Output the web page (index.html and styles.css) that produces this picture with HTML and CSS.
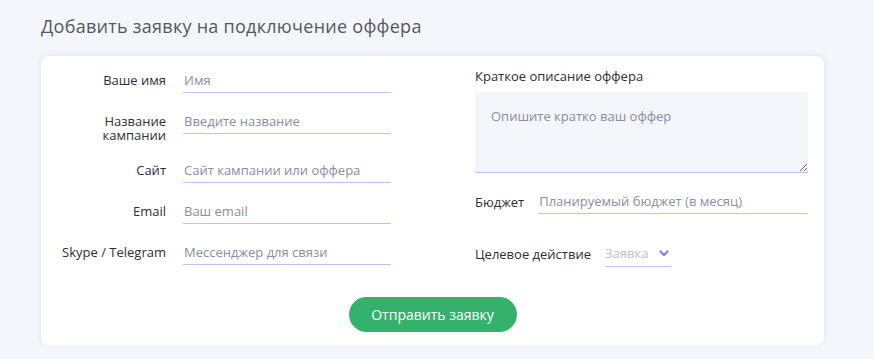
FILE: index.html
```html
<!DOCTYPE html>
<html lang="ru">
<head>
    <meta charset="UTF-8">
    <meta name="viewport" content="width=device-width, initial-scale=1.0">
    <title>Добавить заявку</title>
    <link rel="stylesheet" href="styles.css">
</head>
<body>
    <h1 class="title">Добавить заявку на подключение оффера</h1>
    <form class="card" action="">
        <div class="cols">
            <div class="col_left">
                <label class="row">
                    <span class="lbl">Ваше имя</span>
                    <input type="text" class="field" placeholder="Имя">
                </label>
                <label class="row">
                    <span class="lbl">Название кампании</span>
                    <input type="text" class="field" placeholder="Введите название">
                </label>
                <label class="row">
                    <span class="lbl">Сайт</span>
                    <input type="text" class="field" placeholder="Сайт кампании или оффера">
                </label>
                <label class="row">
                    <span class="lbl">Email</span>
                    <input type="text" class="field" placeholder="Ваш email">
                </label>
                <label class="row">
                    <span class="lbl">Skype / Telegram</span>
                    <input type="text" class="field" placeholder="Мессенджер для связи">
                </label>
            </div>
            <div class="col_right">
                <p class="desc_lbl">Краткое описание оффера</p>
                <textarea class="desc" placeholder="Опишите кратко ваш оффер"></textarea>
                <label class="line budget">
                    <span class="lbl_r">Бюджет</span>
                    <input type="text" class="field" placeholder="Планируемый бюджет (в месяц)">
                </label>
                <div class="line target">
                    <span class="lbl_r">Целевое действие</span>
                    <div class="select">
                        <select>
                            <option>Заявка</option>
                            <option>Продажа</option>
                            <option>Регистрация</option>
                        </select>
                        <svg width="10" height="7" viewBox="0 0 10 7"><path d="M1.5 1.5 L5 5 L8.5 1.5" fill="none" stroke="#9a7cf1" stroke-width="2.4" stroke-linecap="round" stroke-linejoin="round"/></svg>
                    </div>
                </div>
            </div>
        </div>
        <div class="foot">
            <button type="button" class="send">Отправить заявку</button>
        </div>
    </form>
</body>
</html>
```

FILE: styles.css
```css
*{margin:0;padding:0;box-sizing:border-box;}
body{background:#f3f6fb;font-family:"Open Sans","Liberation Sans",sans-serif;color:#2e2d3a;padding:14px 50px 0 41px;}
.title{font-size:18px;font-weight:400;color:#555663;line-height:24px;margin-bottom:18px;letter-spacing:.27px;}
.card{background:#fff;border-radius:8px;box-shadow:0 0 6px rgba(180,190,215,.35);padding:11px 16px 13px 16px;}
.cols{display:flex;gap:84px;}
.col_left{width:334px;display:flex;flex-direction:column;gap:15px;}
.row{display:flex;gap:17px;align-items:flex-start;}
.lbl{width:109px;text-align:right;font-size:13px;line-height:14px;padding-top:6px;}
.field{flex:1;height:26px;border:none;border-bottom:1px solid #c9b9f5;outline:none;font:inherit;font-size:13px;line-height:16px;padding:5px 0 4px 1px;color:#2e2d3a;background:transparent;}
.field::placeholder{color:#8b8ca6;}
.col_right{flex:1;display:flex;flex-direction:column;}
.desc_lbl{font-size:13px;line-height:16px;padding-top:1px;margin-bottom:8px;}
.desc{height:81px;border:none;border-bottom:1px solid #c9b9f5;background:#f3f6fb;outline:none;font:inherit;font-size:13px;line-height:16px;padding:16px;resize:vertical;color:#2e2d3a;}
.desc::placeholder{color:#8b8ca6;}
.line{display:flex;align-items:flex-start;gap:14px;}
.lbl_r{font-size:13px;line-height:14px;padding-top:7px;}
.budget{margin-top:15px;}
.target{margin-top:26px;gap:14px;}
.select{display:flex;align-items:center;gap:8px;width:66px;height:27px;border-bottom:1px solid #c9b9f5;}
.select select{appearance:none;width:46px;border:none;outline:none;background:transparent;font:inherit;font-size:13px;color:#c1c1c6;}
.select svg{display:block;}
.foot{display:flex;justify-content:center;margin-top:30px;}
.send{width:168px;height:35px;border:none;border-radius:18px;background:#34b26b;color:#fff;font:inherit;font-size:14px;cursor:pointer;}
```
